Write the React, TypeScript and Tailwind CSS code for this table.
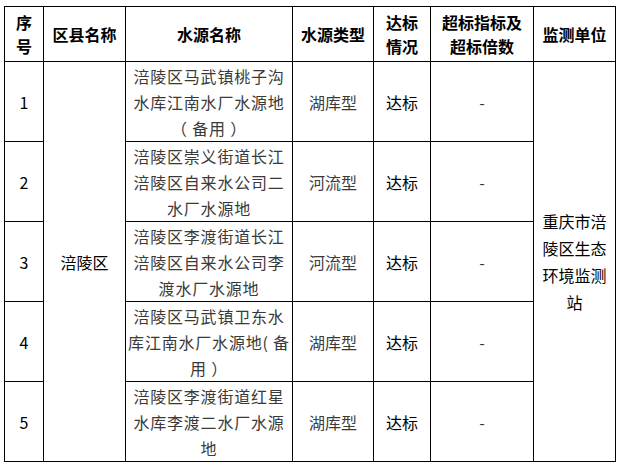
import React from "react";

const font = { fontFamily: '"Noto Sans CJK SC", "Noto Sans", sans-serif' };

const rows = [
  { n: "1", name: ["涪陵区马武镇桃子沟", "水库江南水厂水源地", "（ 备用 ）"], type: "湖库型" },
  { n: "2", name: ["涪陵区崇义街道长江", "涪陵区自来水公司二", "水厂水源地"], type: "河流型" },
  { n: "3", name: ["涪陵区李渡街道长江", "涪陵区自来水公司李", "渡水厂水源地"], type: "河流型" },
  { n: "4", name: ["涪陵区马武镇卫东水", "库江南水厂水源地( 备", "用 ）"], type: "湖库型" },
  { n: "5", name: ["涪陵区李渡街道红星", "水库李渡二水厂水源", "地"], type: "湖库型" },
];

export default function App() {
  return (
    <div className="w-[620px] h-[468px] bg-white pt-[6px] pl-[4px]" style={font}>
      <table className="border-collapse table-fixed w-[611px] text-[16px] text-black">
        <colgroup>
          <col className="w-[39px]" />
          <col className="w-[82px]" />
          <col className="w-[167px]" />
          <col className="w-[81px]" />
          <col className="w-[57px]" />
          <col className="w-[103px]" />
          <col className="w-[82px]" />
        </colgroup>
        <thead>
          <tr className="h-[55px] font-bold leading-[24px]">
            <th className="border border-black p-0 text-center">序<br />号</th>
            <th className="border border-black p-0 text-center">区县名称</th>
            <th className="border border-black p-0 text-center">水源名称</th>
            <th className="border border-black p-0 text-center">水源类型</th>
            <th className="border border-black p-0 text-center">达标<br />情况</th>
            <th className="border border-black p-0 text-center">超标指标及<br />超标倍数</th>
            <th className="border border-black p-0 text-center">监测单位</th>
          </tr>
        </thead>
        <tbody>
          {rows.map((r, i) => (
            <tr key={r.n} className="h-[80px]">
              <td className="border border-black p-0 text-center">{r.n}</td>
              {i === 0 && (
                <td rowSpan={5} className="border border-black p-0 text-center">涪陵区</td>
              )}
              <td className="border border-black p-0 text-center text-[#3a3a3a] leading-[26px] tracking-[0.8px]">
                {r.name.map((l, j) => (
                  <div key={j} className="whitespace-pre">{l}</div>
                ))}
              </td>
              <td className="border border-black p-0 text-center text-[#3a3a3a]">{r.type}</td>
              <td className="border border-black p-0 text-center">达标</td>
              <td className="border border-black p-0 text-center text-[#3a3a3a]">-</td>
              {i === 0 && (
                <td rowSpan={5} className="border border-black p-0 text-center leading-[27px]">
                  重庆市涪<br />陵区生态<br />环境监测<br />站
                </td>
              )}
            </tr>
          ))}
        </tbody>
      </table>
    </div>
  );
}
